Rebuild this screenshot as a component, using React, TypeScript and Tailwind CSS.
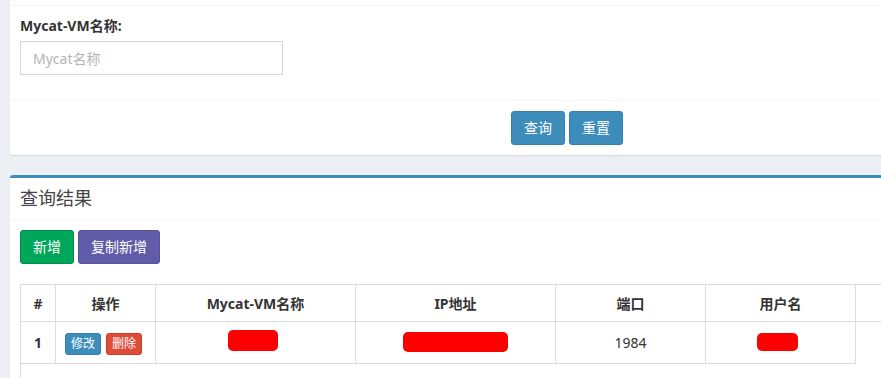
import React from 'react'

const cols = 'grid grid-cols-[35px_100px_200px_200px_150px_150px_1fr]'

function Redact({ w, h }: { w: number; h: number }) {
  // red redaction scribble over the real value
  return <span className="inline-block rounded-[5px] bg-[#ff0000]" style={{ width: w, height: h }} />
}

export default function App() {
  return (
    <div className="h-[378px] overflow-hidden bg-[#ecf0f5] pl-[10px] font-['Noto_Sans','Noto_Sans_CJK_SC',sans-serif] text-[14px] text-[#333]">
      <div className="w-[1100px]">
        {/* Search box */}
        <div className="rounded-b-[3px] bg-white shadow-[0_1px_1px_rgba(0,0,0,0.1)]">
          <div className="h-[6px] border-b border-[#f4f4f4]" />
          <div className="p-[10px]">
            <label className="mb-[5px] block font-bold leading-[20px]">Mycat-VM名称:</label>
            <input
              className="mb-[15px] block h-[34px] w-[263px] border border-[#d2d6de] px-[12px] text-[14px] outline-none placeholder:text-[#b5b5b5]"
              placeholder="Mycat名称"
            />
          </div>
          <div className="flex gap-[4px] border-t border-[#f4f4f4] p-[10px] pl-[501px]">
            <button className="rounded-[3px] border border-[#367fa9] bg-[#3c8dbc] px-[12px] py-[6px] leading-[20px] text-white">查询</button>
            <button className="rounded-[3px] border border-[#367fa9] bg-[#3c8dbc] px-[12px] py-[6px] leading-[20px] text-white">重置</button>
          </div>
        </div>

        {/* Result box */}
        <div className="mt-[20px] rounded-[3px] border-t-[3px] border-[#3c8dbc] bg-white shadow-[0_1px_1px_rgba(0,0,0,0.1)]">
          <div className="border-b border-[#f4f4f4] px-[10px] py-[10px]">
            <h3 className="text-[18px] leading-[21px] text-[#444]">查询结果</h3>
          </div>
          <div className="p-[10px]">
            <div className="flex gap-[4px]">
              <button className="rounded-[3px] border border-[#008d4c] bg-[#00a65a] px-[12px] py-[6px] leading-[20px] text-white">新增</button>
              <button className="rounded-[3px] border border-[#555299] bg-[#605ca8] px-[12px] py-[6px] leading-[20px] text-white">复制新增</button>
            </div>

            <div className="mt-[20px] h-[200px] border-l border-[#dddddd]">
              <div className={`${cols} border-t border-[#dddddd] font-bold`}>
                {['#', '操作', 'Mycat-VM名称', 'IP地址', '端口', '用户名', ''].map((t, i) => (
                  <div key={i} className="flex h-[37px] items-center justify-center border-r border-b border-[#dddddd]">
                    {t}
                  </div>
                ))}
              </div>
              <div className={cols}>
                <div className="flex h-[42px] items-center justify-center border-r border-b border-[#dddddd] font-bold">1</div>
                <div className="flex h-[42px] items-center justify-center gap-[5px] border-r border-b border-[#dddddd] pr-[4px] pt-[2px]">
                  <button className="rounded-[3px] border border-[#367fa9] bg-[#3c8dbc] px-[5px] py-[1px] text-[12px] leading-[18px] text-white">修改</button>
                  <button className="rounded-[3px] border border-[#d73925] bg-[#dd4b39] px-[5px] py-[1px] text-[12px] leading-[18px] text-white">删除</button>
                </div>
                <div className="flex h-[42px] items-center justify-center border-r border-b border-[#dddddd] pb-[5px] pr-[6px]">
                  <Redact w={50} h={21} />
                </div>
                <div className="flex h-[42px] items-center justify-center border-r border-b border-[#dddddd] pb-[2px]">
                  <Redact w={105} h={20} />
                </div>
                <div className="flex h-[42px] items-center justify-center border-r border-b border-[#dddddd]">1984</div>
                <div className="flex h-[42px] items-center justify-center border-r border-b border-[#dddddd] pb-[2px] pr-[6px]">
                  <Redact w={41} h={18} />
                </div>
                <div className="h-[42px]" />
              </div>
            </div>
          </div>
        </div>
      </div>
    </div>
  )
}
